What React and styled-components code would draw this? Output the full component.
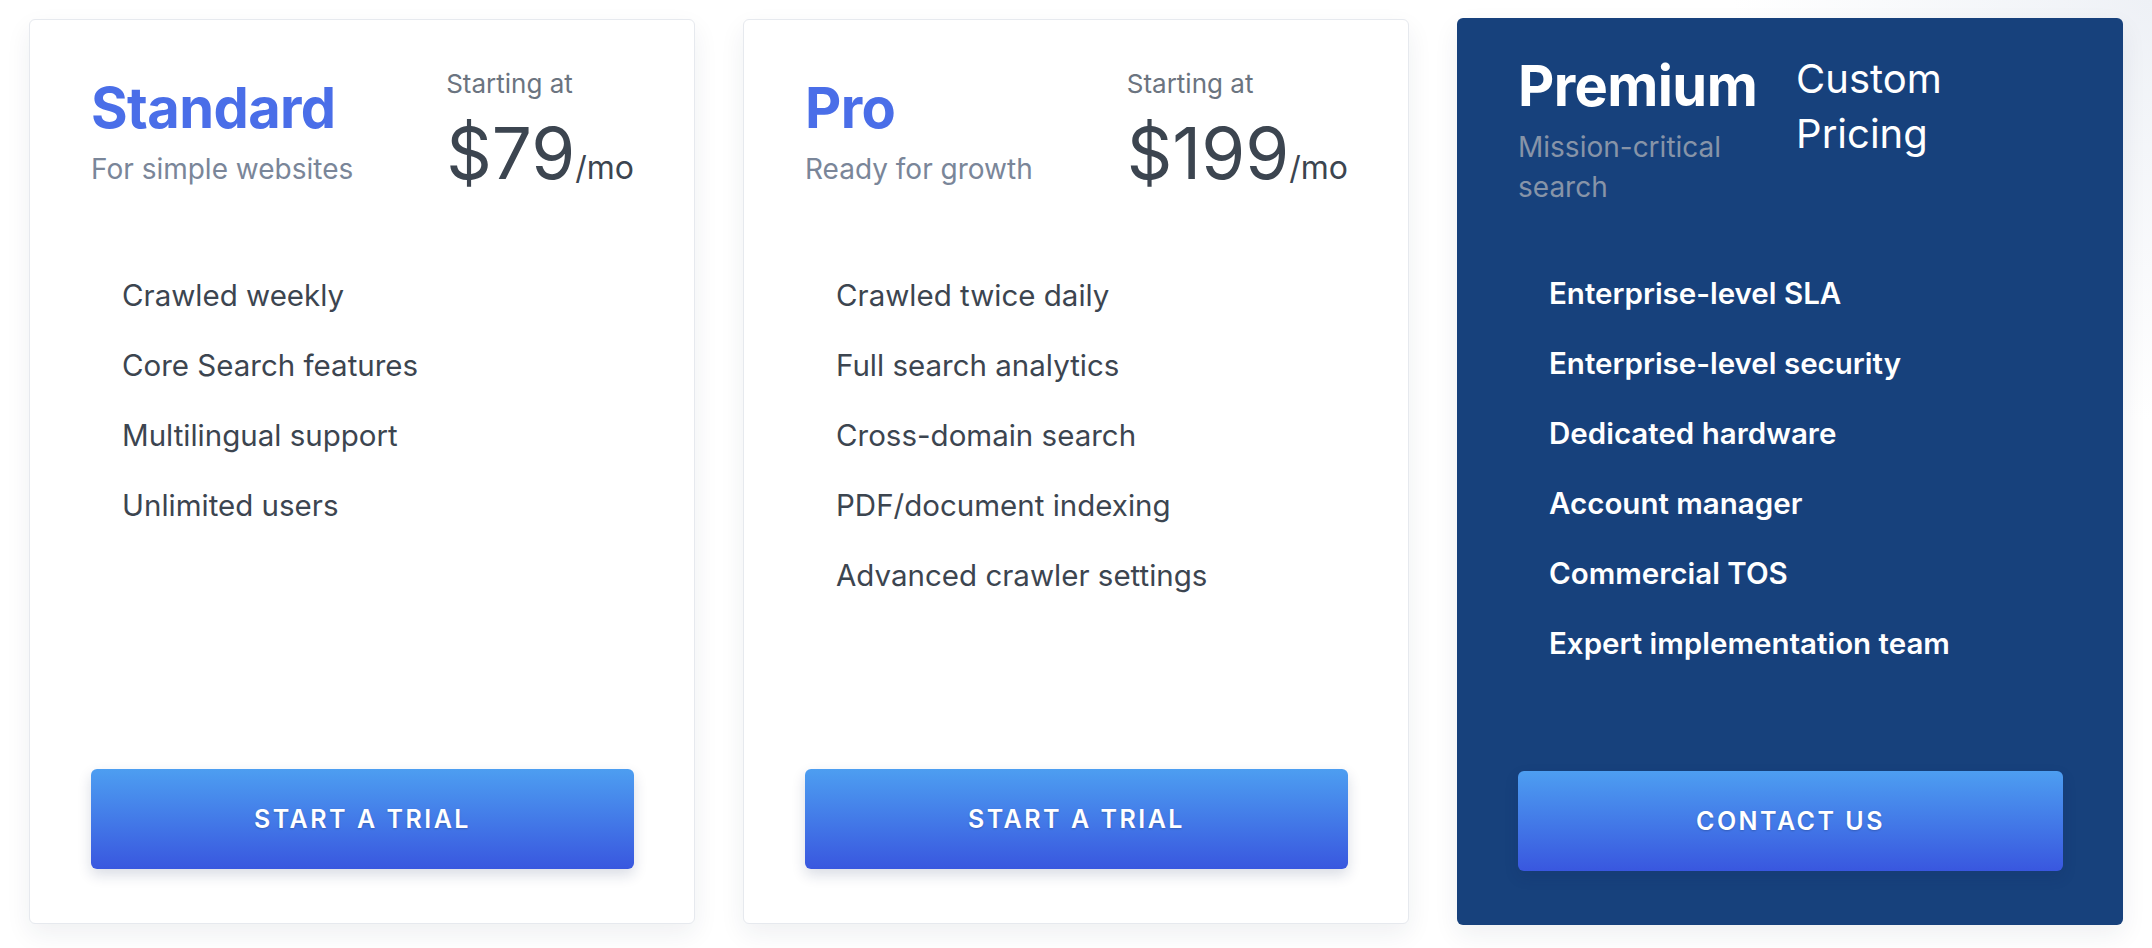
import React from 'react'
import styled, { createGlobalStyle } from 'styled-components'

const plans = [
  {
    name: 'Standard',
    tagline: 'For simple websites',
    price: '$79',
    features: ['Crawled weekly', 'Core Search features', 'Multilingual support', 'Unlimited users'],
    cta: 'Start a trial',
  },
  {
    name: 'Pro',
    tagline: 'Ready for growth',
    price: '$199',
    features: [
      'Crawled twice daily',
      'Full search analytics',
      'Cross-domain search',
      'PDF/document indexing',
      'Advanced crawler settings',
    ],
    cta: 'Start a trial',
  },
  {
    name: 'Premium',
    tagline: 'Mission-critical search',
    custom: 'Custom Pricing',
    features: [
      'Enterprise-level SLA',
      'Enterprise-level security',
      'Dedicated hardware',
      'Account manager',
      'Commercial TOS',
      'Expert implementation team',
    ],
    cta: 'Contact us',
    dark: true,
  },
]

const PlanCard = ({ plan }) => {
  const { name, tagline, price, custom, features, cta, dark } = plan
  return (
    <Card $dark={dark}>
      <HeaderArea>
        <Header>
          <TitleBlock $dark={dark}>
            <PlanName $dark={dark}>{name}</PlanName>
            <Tagline $dark={dark}>{tagline}</Tagline>
          </TitleBlock>
          {custom ? (
            <CustomPrice>{custom}</CustomPrice>
          ) : (
            <PriceBlock>
              <Starting>Starting at</Starting>
              <Price>
                {price}
                <Per>/mo</Per>
              </Price>
            </PriceBlock>
          )}
        </Header>
      </HeaderArea>
      <Features>
        {features.map(f => (
          <Feature key={f} $dark={dark}>{f}</Feature>
        ))}
      </Features>
      <Button>{cta}</Button>
    </Card>
  )
}

export default () => (
  <>
    <GlobalStyle />
    <Page>
      {plans.map(p => (
        <PlanCard key={p.name} plan={p} />
      ))}
    </Page>
  </>
)

const GlobalStyle = createGlobalStyle`
  html, body {
    margin: 0;
    padding: 0;
    background: #fff;
    font-family: Inter, "Noto Sans", "Liberation Sans", sans-serif;
  }
  * { box-sizing: border-box; }
`

const Page = styled.div`
  display: grid;
  grid-template-columns: repeat(3, 1fr);
  gap: 48px;
  padding: 19px 29px 24px;
  min-height: 948px;
  background: radial-gradient(circle at 100% 0%, #eef1f6 0, rgba(255, 255, 255, 0) 420px), #fff;
`

const Card = styled.div`
  display: flex;
  flex-direction: column;
  height: ${p => (p.$dark ? '907px' : '905px')};
  margin-top: ${p => (p.$dark ? '-1px' : '0')};
  padding: 20px 60px 54px 61px;
  border-radius: 6px;
  background: ${p => (p.$dark ? '#17417c' : '#fff')};
  border: ${p => (p.$dark ? 'none' : '1px solid #e6e9ee')};
  box-shadow: 0 10px 26px rgba(25, 40, 70, 0.07);
`

const HeaderArea = styled.div`
  height: 180px;
  display: flex;
  align-items: center;
`

const Header = styled.div`
  flex: 1;
  display: flex;
  justify-content: space-between;
  align-items: flex-start;
`

const TitleBlock = styled.div`
  margin-top: ${p => (p.$dark ? '4px' : '7px')};
`

const PlanName = styled.div`
  font-size: 56px;
  line-height: 1.2;
  font-weight: 700;
  letter-spacing: -0.6px;
  color: ${p => (p.$dark ? '#fff' : '#4a6ee8')};
`

const Tagline = styled.div`
  margin-top: 6px;
  font-size: 28px;
  line-height: 40px;
  color: ${p => (p.$dark ? '#8794a8' : '#7a8699')};
`

const PriceBlock = styled.div`
  color: #3c4550;
`

const Starting = styled.div`
  font-size: 26px;
  line-height: 1.2;
  color: #6b7480;
`

const Price = styled.div`
  margin-top: 14px;
  font-size: 71px;
  line-height: 1.1;
  font-weight: 400;
  white-space: nowrap;
`

const Per = styled.span`
  font-size: 32px;
`

const CustomPrice = styled.div`
  margin-top: 2px;
  font-size: 40px;
  line-height: 55px;
  color: #fff;
`

const Features = styled.ul`
  list-style: none;
  margin: 40px 0 0;
  padding: 0 0 0 31px;
`

const Feature = styled.li`
  font-size: 29.5px;
  line-height: 70px;
  font-weight: ${p => (p.$dark ? 600 : 400)};
  color: ${p => (p.$dark ? '#fff' : '#3c4550')};
`

const Button = styled.button`
  margin-top: auto;
  width: 100%;
  height: 100px;
  border: none;
  border-radius: 6px;
  background: linear-gradient(180deg, #4d9ef1 0%, #3957df 100%);
  box-shadow: 0 6px 14px rgba(20, 40, 90, 0.16);
  color: #fff;
  font-family: inherit;
  font-size: 25px;
  font-weight: 600;
  letter-spacing: 2.5px;
  text-transform: uppercase;
  text-shadow: 0 1px 2px rgba(0, 0, 0, 0.2);
  cursor: pointer;
`
